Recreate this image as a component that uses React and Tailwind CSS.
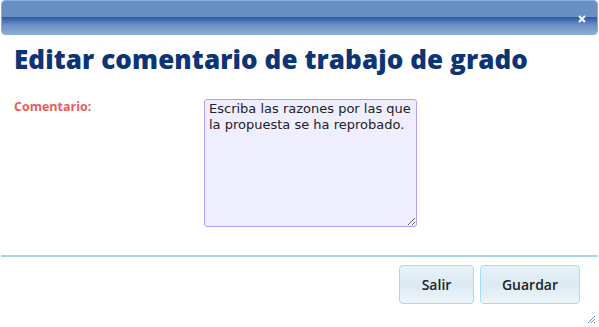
export default function App() {
  return (
    <div className="w-[599px] h-[327px] bg-white relative overflow-hidden font-['Open_Sans',sans-serif]">
      <div className="mx-px h-[35px] rounded-[4px] border border-[#7fb0e0] overflow-hidden flex flex-col relative">
        <div className="h-[16px] bg-[#6a8fc2]" />
        <div className="flex-1 bg-gradient-to-b from-[#2c599e] via-[#6d92c5] to-[#8eaad2]" />
        <svg className="absolute right-[11px] top-[14px]" width="8" height="8" viewBox="0 0 8 8">
          <path d="M1 1 L7 7 M7 1 L1 7" stroke="#eef3fa" strokeWidth="2.2" />
        </svg>
      </div>

      <h1 className="mt-[8px] ml-[14px] text-[26px] leading-[32px] font-extrabold text-[#0d3475] font-['Open_Sans',sans-serif] tracking-[0.1px]">
        Editar comentario de trabajo de grado
      </h1>

      <div className="flex mt-[24px] ml-[14px] h-[128px]">
        <label className="w-[190px] text-[12.5px] font-bold text-[#ea5b5b] leading-[16px]">Comentario:</label>
        <textarea
          defaultValue="Escriba las razones por las que la propuesta se ha reprobado."
          className="w-[213px] h-[128px] bg-[#efeeff] border border-[#a9a6f7] rounded-[3px] px-[4px] py-[1px] text-[13px] leading-[16px] text-[#222] font-['DejaVu_Sans',sans-serif] outline-none"
        />
      </div>

      <div className="mt-[28px] mx-px border-t-2 border-[#a9d2ec]" />

      <div className="flex justify-end gap-[6px] pr-[19px] mt-[8px]">
        <button className="w-[75px] h-[39px] rounded-[4px] border border-[#a6daf2] bg-gradient-to-b from-[#e8f2f9] via-[#dbeaf3] to-[#eef6fa] text-[14px] font-semibold text-[#222]">
          Salir
        </button>
        <button className="w-[100px] h-[39px] rounded-[4px] border border-[#a6daf2] bg-gradient-to-b from-[#e8f2f9] via-[#dbeaf3] to-[#eef6fa] text-[14px] font-semibold text-[#222]">
          Guardar
        </button>
      </div>

      <svg className="absolute right-[3px] bottom-[3px]" width="10" height="10" viewBox="0 0 10 10">
        <path d="M9 2 L2 9 M9 5 L5 9 M9 8 L8 9" stroke="#5b8fbf" strokeWidth="1" />
      </svg>
    </div>
  );
}
